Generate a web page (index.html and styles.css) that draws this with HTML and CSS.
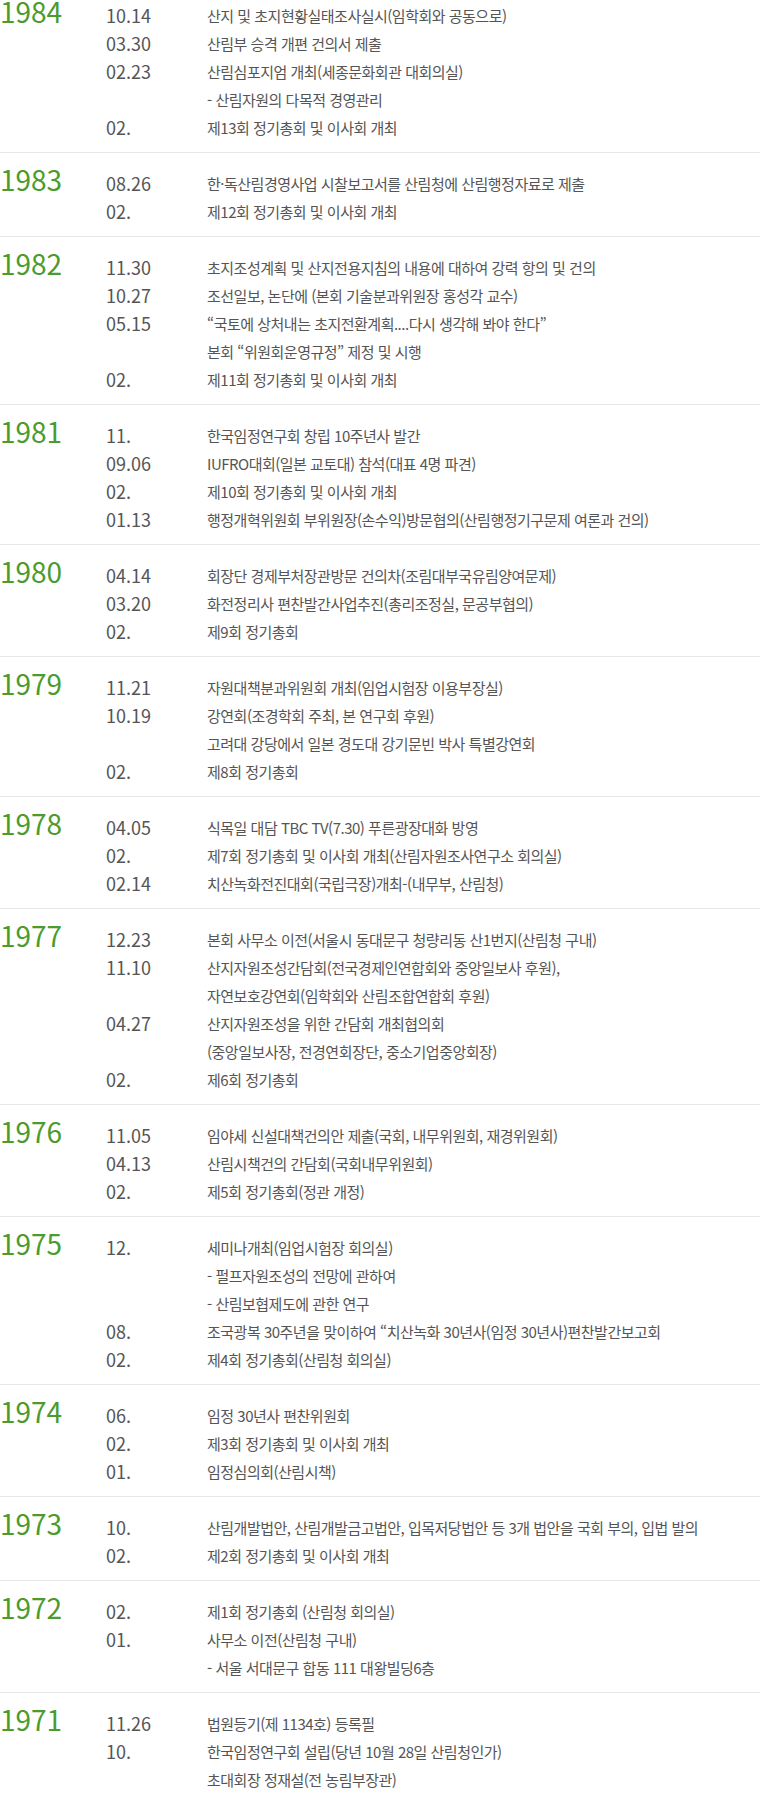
FILE: index.html
```html
<!DOCTYPE html>
<html lang="ko">
<head>
    <meta charset="utf-8">
    <title>연혁</title>
    <link rel="stylesheet" href="styles.css">
</head>
<body>
    <div class="history">
        <div class="year-box">
            <div class="year">1984</div>
            <ul class="events">
                <li><span class="date">10.14</span><span class="desc">산지 및 초지현황실태조사실시(임학회와 공동으로)</span></li>
                <li><span class="date">03.30</span><span class="desc">산림부 승격 개편 건의서 제출</span></li>
                <li><span class="date">02.23</span><span class="desc">산림심포지엄 개최(세종문화회관 대회의실)</span></li>
                <li><span class="date"></span><span class="desc">- 산림자원의 다목적 경영관리</span></li>
                <li><span class="date">02.</span><span class="desc">제13회 정기총회 및 이사회 개최</span></li>
            </ul>
        </div>
        <div class="year-box">
            <div class="year">1983</div>
            <ul class="events">
                <li><span class="date">08.26</span><span class="desc">한·독산림경영사업 시찰보고서를 산림청에 산림행정자료로 제출</span></li>
                <li><span class="date">02.</span><span class="desc">제12회 정기총회 및 이사회 개최</span></li>
            </ul>
        </div>
        <div class="year-box">
            <div class="year">1982</div>
            <ul class="events">
                <li><span class="date">11.30</span><span class="desc">초지조성계획 및 산지전용지침의 내용에 대하여 강력 항의 및 건의</span></li>
                <li><span class="date">10.27</span><span class="desc">조선일보, 논단에 (본회 기술분과위원장 홍성각 교수)</span></li>
                <li><span class="date">05.15</span><span class="desc">“국토에 상처내는 초지전환계획....다시 생각해 봐야 한다”</span></li>
                <li><span class="date"></span><span class="desc">본회 “위원회운영규정” 제정 및 시행</span></li>
                <li><span class="date">02.</span><span class="desc">제11회 정기총회 및 이사회 개최</span></li>
            </ul>
        </div>
        <div class="year-box">
            <div class="year">1981</div>
            <ul class="events">
                <li><span class="date">11.</span><span class="desc">한국임정연구회 창립 10주년사 발간</span></li>
                <li><span class="date">09.06</span><span class="desc">IUFRO대회(일본 교토대) 참석(대표 4명 파견)</span></li>
                <li><span class="date">02.</span><span class="desc">제10회 정기총회 및 이사회 개최</span></li>
                <li><span class="date">01.13</span><span class="desc">행정개혁위원회 부위원장(손수익)방문협의(산림행정기구문제 여론과 건의)</span></li>
            </ul>
        </div>
        <div class="year-box">
            <div class="year">1980</div>
            <ul class="events">
                <li><span class="date">04.14</span><span class="desc">회장단 경제부처장관방문 건의차(조림대부국유림양여문제)</span></li>
                <li><span class="date">03.20</span><span class="desc">화전정리사 편찬발간사업추진(총리조정실, 문공부협의)</span></li>
                <li><span class="date">02.</span><span class="desc">제9회 정기총회</span></li>
            </ul>
        </div>
        <div class="year-box">
            <div class="year">1979</div>
            <ul class="events">
                <li><span class="date">11.21</span><span class="desc">자원대책분과위원회 개최(임업시험장 이용부장실)</span></li>
                <li><span class="date">10.19</span><span class="desc">강연회(조경학회 주최, 본 연구회 후원)</span></li>
                <li><span class="date"></span><span class="desc">고려대 강당에서 일본 경도대 강기문빈 박사 특별강연회</span></li>
                <li><span class="date">02.</span><span class="desc">제8회 정기총회</span></li>
            </ul>
        </div>
        <div class="year-box">
            <div class="year">1978</div>
            <ul class="events">
                <li><span class="date">04.05</span><span class="desc">식목일 대담 TBC TV(7.30) 푸른광장대화 방영</span></li>
                <li><span class="date">02.</span><span class="desc">제7회 정기총회 및 이사회 개최(산림자원조사연구소 회의실)</span></li>
                <li><span class="date">02.14</span><span class="desc">치산녹화전진대회(국립극장)개최-(내무부, 산림청)</span></li>
            </ul>
        </div>
        <div class="year-box">
            <div class="year">1977</div>
            <ul class="events">
                <li><span class="date">12.23</span><span class="desc">본회 사무소 이전(서울시 동대문구 청량리동 산1번지(산림청 구내)</span></li>
                <li><span class="date">11.10</span><span class="desc">산지자원조성간담회(전국경제인연합회와 중앙일보사 후원),</span></li>
                <li><span class="date"></span><span class="desc">자연보호강연회(임학회와 산림조합연합회 후원)</span></li>
                <li><span class="date">04.27</span><span class="desc">산지자원조성을 위한 간담회 개최협의회</span></li>
                <li><span class="date"></span><span class="desc">(중앙일보사장, 전경연회장단, 중소기업중앙회장)</span></li>
                <li><span class="date">02.</span><span class="desc">제6회 정기총회</span></li>
            </ul>
        </div>
        <div class="year-box">
            <div class="year">1976</div>
            <ul class="events">
                <li><span class="date">11.05</span><span class="desc">임야세 신설대책건의안 제출(국회, 내무위원회, 재경위원회)</span></li>
                <li><span class="date">04.13</span><span class="desc">산림시책건의 간담회(국회내무위원회)</span></li>
                <li><span class="date">02.</span><span class="desc">제5회 정기총회(정관 개정)</span></li>
            </ul>
        </div>
        <div class="year-box">
            <div class="year">1975</div>
            <ul class="events">
                <li><span class="date">12.</span><span class="desc">세미나개최(임업시험장 회의실)</span></li>
                <li><span class="date"></span><span class="desc">- 펄프자원조성의 전망에 관하여</span></li>
                <li><span class="date"></span><span class="desc">- 산림보협제도에 관한 연구</span></li>
                <li><span class="date">08.</span><span class="desc">조국광복 30주년을 맞이하여 “치산녹화 30년사(임정 30년사)편찬발간보고회</span></li>
                <li><span class="date">02.</span><span class="desc">제4회 정기총회(산림청 회의실)</span></li>
            </ul>
        </div>
        <div class="year-box">
            <div class="year">1974</div>
            <ul class="events">
                <li><span class="date">06.</span><span class="desc">임정 30년사 편찬위원회</span></li>
                <li><span class="date">02.</span><span class="desc">제3회 정기총회 및 이사회 개최</span></li>
                <li><span class="date">01.</span><span class="desc">임정심의회(산림시책)</span></li>
            </ul>
        </div>
        <div class="year-box">
            <div class="year">1973</div>
            <ul class="events">
                <li><span class="date">10.</span><span class="desc">산림개발법안, 산림개발금고법안, 입목저당법안 등 3개 법안을 국회 부의, 입법 발의</span></li>
                <li><span class="date">02.</span><span class="desc">제2회 정기총회 및 이사회 개최</span></li>
            </ul>
        </div>
        <div class="year-box">
            <div class="year">1972</div>
            <ul class="events">
                <li><span class="date">02.</span><span class="desc">제1회 정기총회 (산림청 회의실)</span></li>
                <li><span class="date">01.</span><span class="desc">사무소 이전(산림청 구내)</span></li>
                <li><span class="date"></span><span class="desc">- 서울 서대문구 합동 111 대왕빌딩6층</span></li>
            </ul>
        </div>
        <div class="year-box">
            <div class="year">1971</div>
            <ul class="events">
                <li><span class="date">11.26</span><span class="desc">법원등기(제 1134호) 등록필</span></li>
                <li><span class="date">10.</span><span class="desc">한국임정연구회 설립(당년 10월 28일 산림청인가)</span></li>
                <li><span class="date"></span><span class="desc">초대회장 정재설(전 농림부장관)</span></li>
            </ul>
        </div>
    </div>
</body>
</html>
```

FILE: styles.css
```css
* {
    box-sizing: border-box;
}
body {
    margin: 0;
    background-color: #fff;
    font-family: "Noto Sans CJK KR", "Noto Sans", sans-serif;
    color: #555;
}
.year-box {
    display: flex;
    padding: 16px 0 11px;
    border-bottom: 1px solid #e6e6e6;
}
.year-box:first-child {
    padding-top: 1px;
}
.year {
    width: 106px;
    flex-shrink: 0;
    font-size: 28px;
    line-height: 20px;
    color: #4b9b2d;
}
.events {
    list-style: none;
    margin: 0;
    padding: 0;
}
.events li {
    display: flex;
    align-items: center;
    height: 28px;
    white-space: nowrap;
}
.date {
    width: 101px;
    flex-shrink: 0;
    font-size: 18px;
    color: #555;
}
.desc {
    font-size: 15px;
    letter-spacing: -0.5px;
    color: #555;
}
```
